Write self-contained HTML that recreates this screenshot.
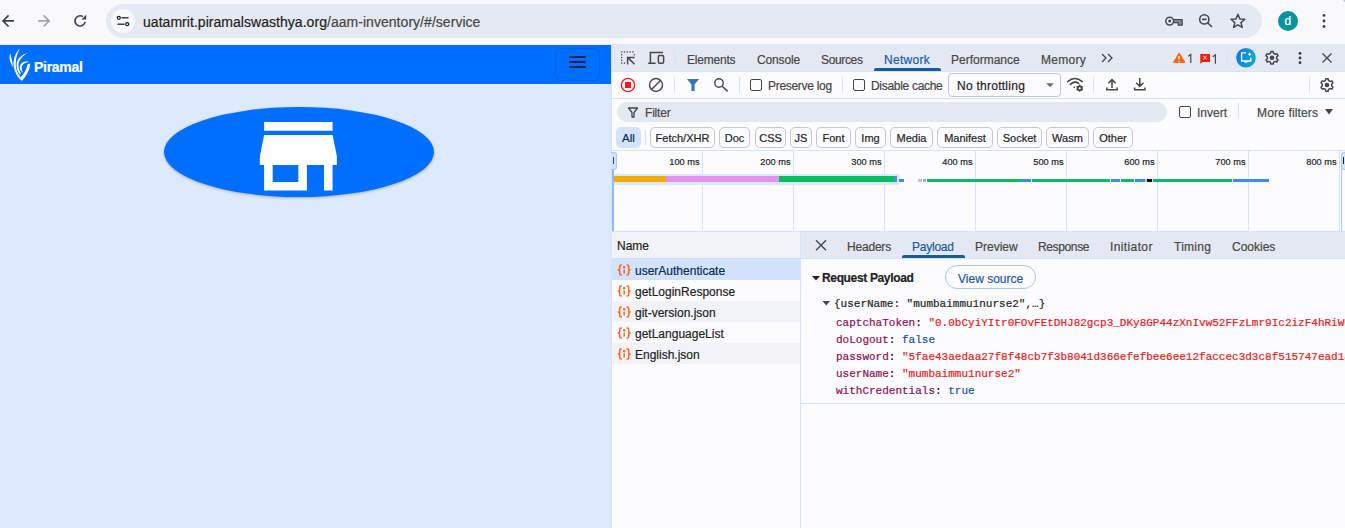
<!DOCTYPE html>
<html><head><meta charset="utf-8">
<style>
*{box-sizing:border-box}
html,body{margin:0;padding:0}
body{width:1345px;height:528px;position:relative;overflow:hidden;font-family:"Liberation Sans",sans-serif;background:#fcfbff}
.tab,.chip,.rt,.t,.mono{-webkit-text-stroke:0.2px currentColor}
.a{position:absolute}
.t{position:absolute;white-space:pre;line-height:1}
svg{position:absolute;overflow:visible}
.tab{position:absolute;top:53px;font-size:12px;color:#474747;white-space:pre;line-height:14px}
.chip{position:absolute;top:127px;height:21px;border:1px solid #c4c7cc;border-radius:5px;font-size:11px;color:#1f1f1f;line-height:21px;text-align:center;white-space:pre}
.vl{position:absolute;width:1px;background:#d3e3fd}
.hl{position:absolute;height:1px;background:#d3e3fd}
.row{position:absolute;left:612px;width:188px;height:21px}
.rt{position:absolute;left:23px;top:4px;font-size:12px;color:#1f1f1f;white-space:pre;line-height:14px}
.mono{font-family:"Liberation Mono",monospace;font-size:11px;white-space:pre;position:absolute;line-height:13px}
.k{color:#8a1050}
.s{color:#e3211b}
.b{color:#1a4fa0}
</style></head>
<body>
<!-- ===== Chrome toolbar ===== -->
<div class="a" style="left:0;top:0;width:1345px;height:45px;background:#f8f8fd"></div>
<div class="a" style="left:0;top:44px;width:1345px;height:1px;background:#e4e6ee"></div>
<!-- back -->
<svg style="left:0;top:0" width="100" height="44">
  <path d="M14 20.9H3.2M8.6 15.3L3 20.9L8.6 26.5" fill="none" stroke="#3d4451" stroke-width="1.7"/>
  <path d="M38.2 20.9H49M43.6 15.3L49.2 20.9L43.6 26.5" fill="none" stroke="#a2a5ab" stroke-width="1.7"/>
  <path d="M82.9 16.6A5.1 5.1 0 1 0 85.1 21.9" fill="none" stroke="#3d4451" stroke-width="1.7"/>
  <path d="M86.2 14.8V19.6H81.4Z" fill="#3d4451"/>
</svg>
<!-- omnibox -->
<div class="a" style="left:106px;top:4px;width:1156px;height:34px;border-radius:17px;background:#e5e9f2"></div>
<div class="a" style="left:111px;top:9px;width:24px;height:24px;border-radius:12px;background:#f8f9fd"></div>
<svg style="left:0;top:0" width="140" height="44">
  <circle cx="118.8" cy="17.8" r="1.5" fill="none" stroke="#1f1f1f" stroke-width="1.3"/>
  <path d="M121.5 17.8H128.5" stroke="#1f1f1f" stroke-width="1.3"/>
  <circle cx="127.2" cy="24.2" r="1.5" fill="none" stroke="#1f1f1f" stroke-width="1.3"/>
  <path d="M117.5 24.2H124.5" stroke="#1f1f1f" stroke-width="1.3"/>
</svg>
<div class="t" style="left:143px;top:14px;font-size:14px;line-height:16px;color:#1f1f1f;letter-spacing:0.04px">uatamrit.piramalswasthya.org<span style="color:#474747">/aam-inventory/#/service</span></div>
<!-- right icons -->
<svg style="left:0;top:0" width="1345" height="44">
  <path d="M1174 19.6H1182.2V25.2H1178.2V22.6H1174" fill="#8a8c92" stroke="#474a52" stroke-width="1.3" stroke-linejoin="round"/>
  <circle cx="1169.7" cy="21.1" r="3.9" fill="#e5e9f2" stroke="#474a52" stroke-width="1.5"/>
  <circle cx="1169.7" cy="21.1" r="1.5" fill="#474a52"/>
  <circle cx="1204.3" cy="19.4" r="4.6" fill="none" stroke="#474a52" stroke-width="1.6"/>
  <path d="M1202 19.4H1206.6M1207.7 22.8L1212 27" stroke="#474a52" stroke-width="1.6"/>
  <path d="M1237.9 14.2L1239.8 18.9L1244.8 19.3L1241 22.6L1242.2 27.4L1237.9 24.8L1233.6 27.4L1234.8 22.6L1231 19.3L1236 18.9Z" fill="none" stroke="#474a52" stroke-width="1.5" stroke-linejoin="round"/>
  <circle cx="1288" cy="21" r="10" fill="#0b939b"/>
  <circle cx="1324" cy="15.4" r="1.45" fill="#3d4451"/>
  <circle cx="1324" cy="21" r="1.45" fill="#3d4451"/>
  <circle cx="1324" cy="26.5" r="1.45" fill="#3d4451"/>
  <circle cx="1346" cy="-1" r="3" fill="#a8c7fa"/>
</svg>
<div class="t" style="left:1284.5px;top:15px;font-size:12px;color:#fff">d</div>

<!-- ===== Page ===== -->
<div class="a" style="left:0;top:45px;width:611px;height:483px;background:#dde9fd"></div>
<div class="a" style="left:0;top:45px;width:611px;height:39px;background:#006eff"></div>
<svg style="left:0;top:0" width="100" height="90">
  <g fill="#fff">
  <path d="M10.3 53.5C11.4 57 12.3 62.5 13.2 67.2C11.5 65 9.6 61 9.5 57.5C9.5 56 9.8 54.5 10.3 53.5Z"/>
  <path d="M20 48.3C15.5 53 13.2 59 13.6 65C14 71 17 76 20.5 80L20.8 77.6C18.2 74 15.8 70 15.7 65C15.5 59 17.3 53 20 48.3Z"/>
  <path d="M27.5 53C22 54.5 17 58.5 16.6 64C16.3 68 17.6 71.5 20 74.5L20.8 73C19 70.5 18.4 67.5 18.6 64C19 59.5 23 55.5 27.5 53Z"/>
  <path d="M29.3 62C25 60.8 20.5 62.5 19.8 66.8C19.4 69.5 21 72 23.5 72.8C22.2 71.5 21.5 69.5 21.8 67.3C22.3 64 25.5 62.5 29.3 62Z"/>
  <path d="M30.2 63.6C30 70.5 26 76.5 21.6 81L19.8 78C23.6 74.8 26.6 70 27.4 64.5Z"/>
  </g>
</svg>
<div class="t" style="left:34px;top:60px;font-size:14px;font-weight:700;color:#fff;letter-spacing:-0.3px">Piramal</div>
<div class="a" style="left:555px;top:48px;width:45px;height:33px;border:1px solid rgba(0,0,0,0.1);border-radius:6px"></div>
<div class="a" style="left:569px;top:56px;width:17px;height:2px;border-radius:1px;background:#002256"></div>
<div class="a" style="left:569px;top:61px;width:17px;height:2px;border-radius:1px;background:#002256"></div>
<div class="a" style="left:569px;top:65.5px;width:17px;height:2px;border-radius:1px;background:#002256"></div>
<!-- ellipse -->
<div class="a" style="left:164px;top:107px;width:270px;height:90px;border-radius:50%;background:#006eff;box-shadow:0 1px 3px rgba(0,0,0,0.25)"></div>
<svg style="left:247.1px;top:105px" width="102.7" height="102.7" viewBox="0 0 24 24">
  <path fill="#fff" d="M20 4H4v2h16V4zm1 10v-2l-1-5H4l-1 5v2h1v6h10v-6h4v6h2v-6h1zm-9 4H6v-4h6v4z"/>
</svg>

<!-- ===== DevTools ===== -->
<div class="a" style="left:611px;top:45px;width:734px;height:483px;background:#fcfbff"></div>
<div class="a" style="left:611px;top:45px;width:1px;height:483px;background:#d3e3fd"></div>
<!-- tab bar -->
<div class="a" style="left:612px;top:45px;width:733px;height:26px;background:#e3e8f2"></div>
<div class="hl" style="left:612px;top:71px;width:733px"></div>
<svg style="left:0;top:0" width="1345" height="100">
  <g fill="#474747">
  <rect x="621" y="51.3" width="1.3" height="1.3"/><rect x="623.8" y="51.3" width="1.3" height="1.3"/><rect x="626.6" y="51.3" width="1.3" height="1.3"/><rect x="629.4" y="51.3" width="1.3" height="1.3"/><rect x="632.2" y="51.3" width="1.3" height="1.3"/>
  <rect x="621" y="54.1" width="1.3" height="1.3"/><rect x="621" y="56.9" width="1.3" height="1.3"/><rect x="621" y="59.7" width="1.3" height="1.3"/><rect x="621" y="62.5" width="1.3" height="1.3"/>
  <rect x="623.8" y="62.5" width="1.3" height="1.3"/><rect x="633.6" y="54.1" width="1.3" height="1.3"/>
  </g>
  <path d="M634.5 64.2L628.2 57.9M627.6 64.4V57.6H634.6" fill="none" stroke="#474747" stroke-width="1.5"/>
  <path d="M650.4 63.2V52.6H663M648.2 63.2H655.6" fill="none" stroke="#474747" stroke-width="1.5"/>
  <rect x="658.4" y="55.6" width="5.2" height="7.7" rx="1.2" fill="none" stroke="#474747" stroke-width="1.5"/>
</svg>
<div class="vl" style="left:674px;top:50px;height:16px"></div>
<div class="tab" style="left:687px;letter-spacing:-0.2px">Elements</div>
<div class="tab" style="left:757px;letter-spacing:-0.14px">Console</div>
<div class="tab" style="left:821px;letter-spacing:-0.35px">Sources</div>
<div class="tab" style="left:884px;color:#1c5a9e;letter-spacing:0.3px">Network</div>
<div class="a" style="left:874px;top:68px;width:67px;height:3px;border-radius:2px 2px 0 0;background:#1c5a9e"></div>
<div class="tab" style="left:951px">Performance</div>
<div class="tab" style="left:1041px;letter-spacing:0.27px">Memory</div>
<svg style="left:0;top:0" width="1345" height="100">
  <path d="M1102 54L1106 58L1102 62M1108 54L1112 58L1108 62" fill="none" stroke="#474747" stroke-width="1.3"/>
  <path d="M1179.2 52.9L1185 62.4H1173.4Z" fill="#fa6410" stroke="#fa6410" stroke-width="0.9" stroke-linejoin="round"/>
  <path d="M1179 56V59.5M1179 61V61.8" stroke="#fff" stroke-width="1.3"/>
  <path d="M1200.5 54H1209.5Q1210 54 1210 54.5V61.5Q1210 62 1209.5 62H1202.5L1200.3 63.8V54.5Q1200.3 54 1200.5 54Z" fill="#f01a10"/>
  <path d="M1203.2 55.8L1206.8 59.4M1206.8 55.8L1203.2 59.4" stroke="#fff" stroke-width="0.9"/>
  <defs><linearGradient id="aig" x1="0" y1="0" x2="1" y2="0.3"><stop offset="0" stop-color="#0c74f2"/><stop offset="1" stop-color="#0ea8c4"/></linearGradient></defs>
  <circle cx="1246" cy="57.7" r="9.8" fill="url(#aig)"/>
  <path d="M1246 52.9H1241.6V61H1250.8V57.6" fill="none" stroke="#fff" stroke-width="1.3"/>
  <path d="M1244.2 61.3L1246 63.4L1247.8 61.3Z" fill="#fff"/>
  <path d="M1249.7 52.3Q1250 54 1251.7 54.3Q1250 54.6 1249.7 56.3Q1249.4 54.6 1247.7 54.3Q1249.4 54 1249.7 52.3Z" fill="#fff"/>
  <path d="M1270.41 53.38L1270.87 51.50L1273.13 51.50L1273.59 53.38L1275.03 54.21L1276.89 53.67L1278.02 55.63L1276.63 56.97L1276.63 58.63L1278.02 59.97L1276.89 61.93L1275.03 61.39L1273.59 62.22L1273.13 64.10L1270.87 64.10L1270.41 62.22L1268.97 61.39L1267.11 61.93L1265.98 59.97L1267.37 58.63L1267.37 56.97L1265.98 55.63L1267.11 53.67L1268.97 54.21Z" fill="none" stroke="#474747" stroke-width="1.5" stroke-linejoin="round"/>
  <circle cx="1272" cy="57.8" r="2.3" fill="#474747"/>
  <circle cx="1300" cy="53.3" r="1.4" fill="#3a3a3a"/>
  <circle cx="1300" cy="58" r="1.4" fill="#3a3a3a"/>
  <circle cx="1300" cy="62.7" r="1.4" fill="#3a3a3a"/>
  <path d="M1322.5 53.5L1331.5 62.5M1331.5 53.5L1322.5 62.5" stroke="#474747" stroke-width="1.3"/>
</svg>
<svg style="left:0;top:0" width="1345" height="80"><path d="M1188.2 56.2L1190.8 54.4V62.9M1212.8 56.8L1215.4 55V63.8" fill="none" stroke="#4a4a4a" stroke-width="1.2"/></svg>
<div class="vl" style="left:1227px;top:50px;height:16px"></div>

<!-- row 2 toolbar -->
<div class="hl" style="left:612px;top:98px;width:733px"></div>
<svg style="left:0;top:0" width="1345" height="100">
  <circle cx="628" cy="85" r="6.6" fill="none" stroke="#f01d1d" stroke-width="1.3"/>
  <rect x="625" y="82" width="6" height="6" fill="#f01d1d"/>
  <circle cx="656" cy="85" r="6.5" fill="none" stroke="#474747" stroke-width="1.4"/>
  <path d="M651.5 89.5L660.5 80.5" stroke="#474747" stroke-width="1.4"/>
  <path d="M687 79H699L694.6 84.5V91H691.4V84.5Z" fill="#3b73b9"/>
  <circle cx="719" cy="83" r="4.2" fill="none" stroke="#474747" stroke-width="1.4"/>
  <path d="M722.2 86.2L727.6 91.4" stroke="#474747" stroke-width="1.5"/>
  <path d="M1067.6 81.6Q1074.9 75.4 1082.2 81.6M1070.4 84.4Q1074.6 80.6 1078.6 83.3" fill="none" stroke="#474747" stroke-width="1.6" stroke-linecap="round"/>
  <path d="M1073.2 87.3L1075 86V88.6Z" fill="#474747"/>
  <circle cx="1079.7" cy="88.2" r="2.2" fill="none" stroke="#474747" stroke-width="1.7"/>
  <path d="M1079.7 84.6V91.8M1076.6 86.4L1082.8 90M1076.6 90L1082.8 86.4" stroke="#474747" stroke-width="1.2"/>
  <circle cx="1079.7" cy="88.2" r="1" fill="#fcfbff"/>
  <path d="M1112 79.6V88M1108.4 83.2L1112 79.6L1115.6 83.2M1106.8 87.6V89.8H1117.2V87.6" fill="none" stroke="#474747" stroke-width="1.5"/>
  <path d="M1139.8 78V86.4M1136.2 82.8L1139.8 86.4L1143.4 82.8M1134.6 87.6V89.8H1145V87.6" fill="none" stroke="#474747" stroke-width="1.5"/>
  <path d="M1325.41 80.58L1325.87 78.70L1328.13 78.70L1328.59 80.58L1330.03 81.41L1331.89 80.87L1333.02 82.83L1331.63 84.17L1331.63 85.83L1333.02 87.17L1331.89 89.13L1330.03 88.59L1328.59 89.42L1328.13 91.30L1325.87 91.30L1325.41 89.42L1323.97 88.59L1322.11 89.13L1320.98 87.17L1322.37 85.83L1322.37 84.17L1320.98 82.83L1322.11 80.87L1323.97 81.41Z" fill="none" stroke="#474747" stroke-width="1.5" stroke-linejoin="round"/>
  <circle cx="1327" cy="85" r="2.3" fill="#474747"/>
</svg>
<div class="vl" style="left:674px;top:77px;height:16px"></div>
<div class="vl" style="left:739px;top:77px;height:16px"></div>
<div class="a" style="left:750px;top:79px;width:12px;height:12px;border:1.4px solid #474747;border-radius:2px"></div>
<div class="tab" style="left:768px;top:79px;letter-spacing:-0.3px">Preserve log</div>
<div class="vl" style="left:842px;top:77px;height:16px"></div>
<div class="a" style="left:853px;top:79px;width:12px;height:12px;border:1.4px solid #474747;border-radius:2px"></div>
<div class="tab" style="left:871px;top:79px;letter-spacing:-0.3px">Disable cache</div>
<div class="a" style="left:948px;top:73px;width:113px;height:24px;border:1px solid #c4c7cc;border-radius:4px;background:#fcfbff"></div>
<div class="tab" style="left:957px;top:79px;color:#1f1f1f;letter-spacing:0.26px">No throttling</div>
<svg style="left:0;top:0" width="1345" height="100"><path d="M1046.2 83.2H1053.8L1050 87.2Z" fill="#6b6b6b"/></svg>
<div class="vl" style="left:1093px;top:77px;height:16px"></div>
<div class="vl" style="left:1309px;top:77px;height:16px"></div>

<!-- row 3 filter -->
<div class="a" style="left:617px;top:102px;width:550px;height:20px;border-radius:10px;background:#e3e8f2"></div>
<svg style="left:0;top:0" width="1345" height="160">
  <path d="M628.5 108H637.5L634 112.5V117H632V112.5Z" fill="none" stroke="#474747" stroke-width="1.3" stroke-linejoin="round"/>
</svg>
<div class="tab" style="left:645px;top:105.5px;color:#474747;letter-spacing:-0.2px">Filter</div>
<div class="a" style="left:1179px;top:106px;width:12px;height:12px;border:1.4px solid #474747;border-radius:2px"></div>
<div class="tab" style="left:1197px;top:106px">Invert</div>
<div class="vl" style="left:1238px;top:103px;height:16px"></div>
<div class="tab" style="left:1257px;top:106px;letter-spacing:0.15px">More filters</div>
<svg style="left:0;top:0" width="1345" height="160"><path d="M1325 109H1333L1329 114.5Z" fill="#474747"/></svg>

<!-- row 4 chips -->
<div class="a" style="left:616px;top:127px;width:25px;height:21px;border-radius:5px;background:#d3e3fd"></div>
<div class="tab" style="left:622px;top:131px;color:#0e2a55;font-size:11.5px">All</div>
<div class="vl" style="left:645px;top:130px;height:15px"></div>
<div class="chip" style="left:650px;width:65px">Fetch/XHR</div>
<div class="chip" style="left:719px;width:31px">Doc</div>
<div class="chip" style="left:755px;width:31px">CSS</div>
<div class="chip" style="left:790px;width:22px">JS</div>
<div class="chip" style="left:816px;width:35px">Font</div>
<div class="chip" style="left:855px;width:31px">Img</div>
<div class="chip" style="left:890px;width:43px">Media</div>
<div class="chip" style="left:937px;width:56px">Manifest</div>
<div class="chip" style="left:997px;width:45px">Socket</div>
<div class="chip" style="left:1046px;width:43px">Wasm</div>
<div class="chip" style="left:1093px;width:40px">Other</div>
<div class="hl" style="left:612px;top:150px;width:733px"></div>

<!-- timeline -->
<div class="vl" style="left:702px;top:151px;height:80px"></div>
<div class="vl" style="left:793px;top:151px;height:80px"></div>
<div class="vl" style="left:884px;top:151px;height:80px"></div>
<div class="vl" style="left:975px;top:151px;height:80px"></div>
<div class="vl" style="left:1066px;top:151px;height:80px"></div>
<div class="vl" style="left:1157px;top:151px;height:80px"></div>
<div class="vl" style="left:1248px;top:151px;height:80px"></div>
<div class="vl" style="left:1339px;top:151px;height:80px"></div>
<div class="t" style="left:599.5px;top:158px;width:100px;text-align:right;font-size:9.2px;color:#1f1f1f">100 ms</div>
<div class="t" style="left:690.5px;top:158px;width:100px;text-align:right;font-size:9.2px;color:#1f1f1f">200 ms</div>
<div class="t" style="left:781.5px;top:158px;width:100px;text-align:right;font-size:9.2px;color:#1f1f1f">300 ms</div>
<div class="t" style="left:872.5px;top:158px;width:100px;text-align:right;font-size:9.2px;color:#1f1f1f">400 ms</div>
<div class="t" style="left:963.5px;top:158px;width:100px;text-align:right;font-size:9.2px;color:#1f1f1f">500 ms</div>
<div class="t" style="left:1054.5px;top:158px;width:100px;text-align:right;font-size:9.2px;color:#1f1f1f">600 ms</div>
<div class="t" style="left:1145.5px;top:158px;width:100px;text-align:right;font-size:9.2px;color:#1f1f1f">700 ms</div>
<div class="t" style="left:1236.5px;top:158px;width:100px;text-align:right;font-size:9.2px;color:#1f1f1f">800 ms</div>
<div class="a" style="left:611px;top:152px;width:6px;height:18px;border-radius:0 3px 3px 0;background:#d3e3fd;border:1px solid #a8c7fa;border-left:none"></div>
<div class="a" style="left:613px;top:157px;width:1.2px;height:7px;background:#1f4d8a"></div>
<div class="a" style="left:1341px;top:152px;width:4px;height:18px;border-radius:3px 0 0 3px;background:#d3e3fd;border:1px solid #a8c7fa;border-right:none"></div>
<div class="a" style="left:1343px;top:157px;width:1px;height:7px;background:#1f1f1f"></div>
<div class="a" style="left:1341px;top:169px;width:1px;height:62px;background:#a8c7fa"></div>
<div class="a" style="left:612px;top:174.3px;width:287px;height:10.4px;background:#dce7fa"></div>
<div class="a" style="left:614px;top:176.2px;width:52px;height:5.5px;background:#f4ab00"></div>
<div class="a" style="left:666px;top:176.2px;width:113px;height:5.5px;background:#e390f0"></div>
<div class="a" style="left:779px;top:176.2px;width:115.2px;height:5.5px;background:#05bd63"></div>
<div class="a" style="left:894.2px;top:176.2px;width:2.4px;height:5.5px;background:#4a8fe6"></div>
<div class="a" style="left:899px;top:179.2px;width:5px;height:2.5px;background:#3a8df0"></div>
<div class="a" style="left:918px;top:179.2px;width:4px;height:2.5px;background:#c4c4c4"></div>
<div class="a" style="left:923px;top:179.2px;width:2.5px;height:2.5px;background:#a9a9a9"></div>
<div class="a" style="left:927px;top:179.2px;width:93.6px;height:2.5px;background:#05bd63"></div>
<div class="a" style="left:1021.2px;top:179.2px;width:9.8px;height:2.5px;background:#3a8df0"></div>
<div class="a" style="left:1031.7px;top:179.2px;width:78.3px;height:2.5px;background:#05bd63"></div>
<div class="a" style="left:1110.9px;top:179.2px;width:9.1px;height:2.5px;background:#3a8df0"></div>
<div class="a" style="left:1121px;top:179.2px;width:13.1px;height:2.5px;background:#05bd63"></div>
<div class="a" style="left:1134.9px;top:179.2px;width:10.4px;height:2.5px;background:#3a8df0"></div>
<div class="a" style="left:1145.3px;top:179.2px;width:1.7px;height:2.5px;background:#c8c8c8"></div>
<div class="a" style="left:1147px;top:179.2px;width:5px;height:2.5px;background:#111"></div>
<div class="a" style="left:1153.1px;top:179.2px;width:79.1px;height:2.5px;background:#05bd63"></div>
<div class="a" style="left:1232.9px;top:179.2px;width:36.1px;height:2.5px;background:#3a8df0"></div>
<div class="a" style="left:612px;top:169px;width:2px;height:62px;background:#93bbf7"></div>
<div class="hl" style="left:612px;top:231px;width:733px"></div>

<!-- name column -->
<div class="a" style="left:612px;top:232px;width:188px;height:26px;background:#f2f3f8"></div>
<div class="hl" style="left:612px;top:258px;width:188px;background:#cadcfa"></div>

<div class="t" style="left:617px;top:240px;font-size:12px;color:#1f1f1f">Name</div>
<div class="row" style="top:259px;background:#d3e3fd"></div>
<div class="row" style="top:301px;background:#f2f3f8"></div>
<div class="row" style="top:343px;background:#f2f3f8"></div>
<div class="vl" style="left:800px;top:232px;height:296px"></div>
<div class="rt" style="left:635px;top:264px;color:#0e2a55">userAuthenticate</div>
<div class="rt" style="left:635px;top:285px">getLoginResponse</div>
<div class="rt" style="left:635px;top:306px">git-version.json</div>
<div class="rt" style="left:635px;top:327px">getLanguageList</div>
<div class="rt" style="left:635px;top:348px">English.json</div>
<svg style="left:0;top:0" width="800" height="370">
  <defs><g id="ic" fill="none" stroke="#f36a26" stroke-width="1.35" transform="translate(624.2 270) scale(1.15) translate(-624.2 -270)">
    <path d="M622.2 265.6H621.5Q620.3 265.6 620.3 266.8V268.6Q620.3 270 618.6 270Q620.3 270 620.3 271.4V273.2Q620.3 274.4 621.5 274.4H622.2"/>
    <path d="M626.2 265.6H626.9Q628.1 265.6 628.1 266.8V268.6Q628.1 270 629.8 270Q628.1 270 628.1 271.4V273.2Q628.1 274.4 626.9 274.4H626.2"/>
    <circle cx="624.2" cy="267.6" r="0.5" fill="#f36a26"/>
    <path d="M624.2 269.6V273"/>
  </g></defs>
  <use href="#ic"/><use href="#ic" y="21"/><use href="#ic" y="42"/><use href="#ic" y="63"/><use href="#ic" y="84"/>
</svg>

<!-- detail panel -->
<div class="a" style="left:801px;top:232px;width:544px;height:26px;background:#e3e8f2"></div>
<div class="hl" style="left:801px;top:258px;width:544px"></div>
<svg style="left:0;top:0" width="1345" height="300">
  <path d="M816 240.2L826 250.2M826 240.2L816 250.2" stroke="#474747" stroke-width="1.4"/>
  <path d="M812 276H820L816 280.5Z" fill="#1f1f1f"/>
  <path d="M822.5 301H830L826.25 305.5Z" fill="#474747"/>
</svg>
<div class="tab" style="left:847px;top:240px;letter-spacing:-0.2px">Headers</div>
<div class="tab" style="left:912px;top:240px;color:#1c5a9e;letter-spacing:-0.23px">Payload</div>
<div class="a" style="left:902px;top:255px;width:63px;height:3px;border-radius:2px 2px 0 0;background:#1c5a9e"></div>
<div class="tab" style="left:975px;top:240px">Preview</div>
<div class="tab" style="left:1038px;top:240px;letter-spacing:-0.37px">Response</div>
<div class="tab" style="left:1110px;top:240px;letter-spacing:0.38px">Initiator</div>
<div class="tab" style="left:1174px;top:240px;letter-spacing:0.27px">Timing</div>
<div class="tab" style="left:1232px;top:240px">Cookies</div>

<div class="t" style="left:822px;top:272px;font-size:12px;font-weight:700;color:#1f1f1f;letter-spacing:-0.35px">Request Payload</div>
<div class="a" style="left:945px;top:265px;width:91px;height:24px;border:1px solid #a8c7fa;border-radius:12px"></div>
<div class="t" style="left:958px;top:272.5px;font-size:12px;color:#1c5a9e">View source</div>

<div class="mono" style="left:834px;top:297.5px;color:#1f1f1f">{userName: "mumbaimmu1nurse2",…}</div>
<div class="mono" style="left:836px;top:316.5px"><span class="k">captchaToken</span>: <span class="s">"0.0bCyiYItr0FOvFEtDHJ82gcp3_DKy8GP44zXnIvw52FFzLmr9Ic2izF4hRiW0aQ</span></div>
<div class="mono" style="left:836px;top:333.5px"><span class="k">doLogout</span>: <span class="b">false</span></div>
<div class="mono" style="left:836px;top:350.5px"><span class="k">password</span>: <span class="s">"5fae43aedaa27f8f48cb7f3b8041d366efefbee6ee12faccec3d3c8f515747ead1a4</span></div>
<div class="mono" style="left:836px;top:367.5px"><span class="k">userName</span>: <span class="s">"mumbaimmu1nurse2"</span></div>
<div class="mono" style="left:836px;top:384.5px"><span class="k">withCredentials</span>: <span class="b">true</span></div>
<div class="hl" style="left:801px;top:403px;width:544px"></div>
</body></html>
